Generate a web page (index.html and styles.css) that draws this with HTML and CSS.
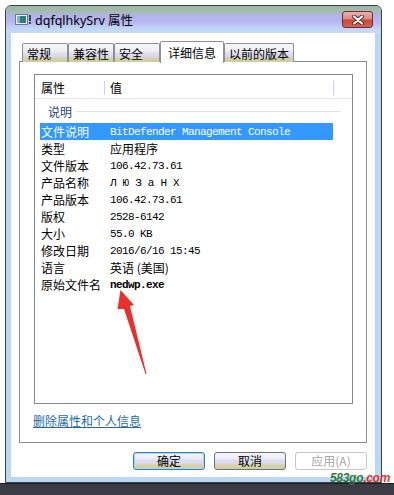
FILE: index.html
```html
<!DOCTYPE html>
<html lang="zh-CN">
<head>
    <meta charset="UTF-8">
    <meta name="viewport" content="width=device-width, initial-scale=1.0">
    <title>dqfqlhkySrv 属性</title>
    <link rel="stylesheet" href="styles.css">
</head>
<body>
    <div class="screen">
        <div class="window">
            <div class="titlebar">
                <svg class="app-icon" width="18" height="12" viewBox="0 0 18 12">
                    <rect x="0.5" y="0.5" width="12" height="10" fill="#e8eef4" stroke="#6a7a88"/>
                    <rect x="2" y="2" width="9" height="7" fill="#2f7a84"/>
                    <rect x="2" y="2" width="3" height="7" fill="#7fb6bd"/>
                    <rect x="14" y="1" width="2" height="6" fill="#3a4650"/>
                    <rect x="14" y="8" width="2" height="2" fill="#3a4650"/>
                </svg>
                <span class="title">dqfqlhkySrv 属性</span>
                <button class="close">
                    <svg width="14" height="10" viewBox="0 0 14 10">
                        <path d="M3 1.5 L11 8.5 M11 1.5 L3 8.5" stroke="#5a2222" stroke-width="4" stroke-linecap="round"/>
                        <path d="M3 1.5 L11 8.5 M11 1.5 L3 8.5" stroke="#ffffff" stroke-width="2.2" stroke-linecap="round"/>
                    </svg>
                </button>
            </div>
            <div class="client">
                <div class="tabs">
                    <div class="tab">常规</div>
                    <div class="tab">兼容性</div>
                    <div class="tab">安全</div>
                    <div class="tab active">详细信息</div>
                    <div class="tab">以前的版本</div>
                </div>
                <div class="panel">
                    <div class="listbox">
                        <div class="list-head">
                            <div class="head-name">属性</div>
                            <div class="head-value">值</div>
                        </div>
                        <div class="group"><span>说明</span></div>
                        <div class="row selected"><span class="name">文件说明</span><span class="value mono">BitDefender Management Console</span></div>
                        <div class="row"><span class="name">类型</span><span class="value">应用程序</span></div>
                        <div class="row"><span class="name">文件版本</span><span class="value mono">106.42.73.61</span></div>
                        <div class="row"><span class="name">产品名称</span><span class="value mono wide">ЛЮЗаНХ</span></div>
                        <div class="row"><span class="name">产品版本</span><span class="value mono">106.42.73.61</span></div>
                        <div class="row"><span class="name">版权</span><span class="value mono">2528-6142</span></div>
                        <div class="row"><span class="name">大小</span><span class="value mono">55.0 KB</span></div>
                        <div class="row"><span class="name">修改日期</span><span class="value mono">2016/6/16 15:45</span></div>
                        <div class="row"><span class="name">语言</span><span class="value">英语 (美国)</span></div>
                        <div class="row"><span class="name">原始文件名</span><span class="value mono bold">nedwp.exe</span></div>
                    </div>
                    <a class="link" href="#">删除属性和个人信息</a>
                </div>
                <div class="buttons">
                    <button class="btn default">确定</button>
                    <button class="btn">取消</button>
                    <button class="btn disabled">应用(A)</button>
                </div>
            </div>
        </div>
        <div class="taskbar"></div>
    </div>

    <svg class="arrow" width="394" height="495" viewBox="0 0 394 495">
        <polygon points="120.5,290 134,305 130,306 146.5,374 145.5,374 124,309 117.5,309" fill="#e8302c"/>
    </svg>

    <div class="watermark"><span class="wm-green">583go</span><span class="wm-red">.com</span></div>
</body>
</html>
```

FILE: styles.css
```css
body {
    margin: 0;
    width: 394px;
    height: 495px;
    overflow: hidden;
    position: relative;
    background: #ffffff;
    font-family: "Noto Sans", "Noto Sans CJK SC", sans-serif;
    font-size: 12px;
    color: #000;
}
.screen {
    padding-top: 5px;
}
.window {
    margin-left: 5px;
    width: 377px;
    box-sizing: border-box;
    border: 1px solid #34434b;
    border-radius: 6px 6px 0 0;
    background: #bcd7f4;
    overflow: hidden;
}
.titlebar {
    height: 27px;
    display: flex;
    align-items: center;
    background: linear-gradient(#9db7a7 0px, #a4bdae 6px, #b2b3ea 9px, #b7b7f0 16px, #c0d5f6 22px, #c4dcf8 27px);
}
.app-icon {
    margin-left: 9px;
    margin-top: 1px;
}
.title {
    margin-left: 2px;
    font-size: 12.5px;
    font-family: "Noto Sans", "Noto Sans CJK SC", sans-serif;
}
.close {
    margin-left: auto;
    margin-right: 8px;
    width: 31px;
    height: 17px;
    padding: 0;
    display: flex;
    align-items: center;
    justify-content: center;
    border: 1px solid #6e2f2f;
    border-radius: 3px;
    background: linear-gradient(#eab0ae 0%, #dc8a86 45%, #c9483c 55%, #d26454 100%);
}
.client {
    margin: 0 6px 5px 5px;
    background: #ffffff;
    padding: 7px 8px 7px 8px;
}
.tabs {
    display: flex;
    align-items: flex-end;
    height: 22px;
    padding-left: 3px;
    position: relative;
    z-index: 1;
}
.tab {
    height: 19px;
    min-width: 46px;
    box-sizing: border-box;
    padding: 0 4px;
    border: 1px solid #8d9096;
    border-bottom: none;
    border-radius: 2px 2px 0 0;
    font-family: "Noto Sans CJK SC", sans-serif;
    font-size: 12px;
    line-height: 19px;
    background: linear-gradient(#f6f6f6 0%, #f0f0f4 35%, #dcdcf2 55%, #d9d9ec 68%, #d4d1ab 80%, #cfcba2 100%);
}
.tab.active {
    height: 22px;
    padding: 0 7px;
    line-height: 21px;
    margin-bottom: -1px;
    background: #ffffff;
}
.panel {
    margin-top: -1px;
    border: 1px solid #898c95;
    padding: 12px 13px 14px 14px;
}
.listbox {
    height: 330px;
    box-sizing: border-box;
    border: 1px solid #828790;
}
.list-head {
    display: flex;
    height: 23px;
    border-bottom: 1px solid #e4e5ee;
    font-family: "Noto Sans CJK SC", sans-serif;
}
.head-name {
    width: 63px;
    padding-left: 6px;
    margin: 6px 0 2px 0;
    height: 14px;
    line-height: 14px;
    border-right: 1px solid #d0d3e6;
}
.head-value {
    width: 223px;
    padding-left: 5px;
    margin: 6px 0 2px 0;
    height: 14px;
    line-height: 14px;
    border-right: 1px solid #c9cbe9;
}
.group {
    height: 24px;
    display: flex;
    align-items: center;
    padding-left: 13px;
    margin-right: 11px;
    font-family: "Noto Sans CJK SC", sans-serif;
    color: #27407c;
}
.group::after {
    content: "";
    flex: 1;
    height: 1px;
    margin-left: 4px;
    background: #dfe2ef;
}
.row {
    display: flex;
    align-items: center;
    height: 17px;
    margin-left: 5px;
    width: 293px;
    font-family: "Noto Sans CJK SC", sans-serif;
    white-space: nowrap;
}
.row.selected {
    background: #3399ff;
    color: #ffffff;
}
.name {
    width: 69px;
    padding-left: 1px;
}
.mono {
    font-family: "Liberation Mono", monospace;
    font-size: 11px;
    letter-spacing: -0.6px;
}
.mono.wide {
    letter-spacing: 6px;
}
.mono.bold {
    font-weight: bold;
}
.link {
    display: block;
    margin-top: 9px;
    margin-left: -1px;
    line-height: 15px;
    width: max-content;
    font-family: "Noto Sans CJK SC", sans-serif;
    color: #1d6ba2;
    text-decoration: underline;
}
.buttons {
    display: flex;
    justify-content: flex-end;
    gap: 9px;
    margin-top: 9px;
}
.btn {
    width: 72px;
    height: 18px;
    padding: 0;
    border: 1px solid #707070;
    border-radius: 3px;
    font-family: "Noto Sans CJK SC", sans-serif;
    font-size: 12px;
    line-height: 16px;
    color: #000;
    background: linear-gradient(#f4f4f8 0%, #ececf6 35%, #d8d8f4 50%, #dcdcf0 62%, #d6d2ac 75%, #d2cea6 100%);
}
.btn.default {
    border-color: #3a7fb2;
    box-shadow: inset 0 0 0 1px #a8d8f0;
}
.btn.disabled {
    border-color: #c6c6c6;
    background: #ffffff;
    color: #a6a6a6;
}
.taskbar {
    height: 12px;
    box-sizing: border-box;
    border-top: 1px solid #1e1e24;
    background: #3c3b43;
}
.arrow {
    position: absolute;
    left: 0;
    top: 0;
    pointer-events: none;
}
.watermark {
    position: absolute;
    left: 330px;
    top: 472px;
    font-family: "Liberation Sans", sans-serif;
    font-size: 12px;
    font-weight: bold;
    font-style: italic;
    letter-spacing: -0.3px;
    line-height: 13px;
}
.wm-green {
    color: #2c7c3c;
}
.wm-red {
    color: #d8372c;
}
```
